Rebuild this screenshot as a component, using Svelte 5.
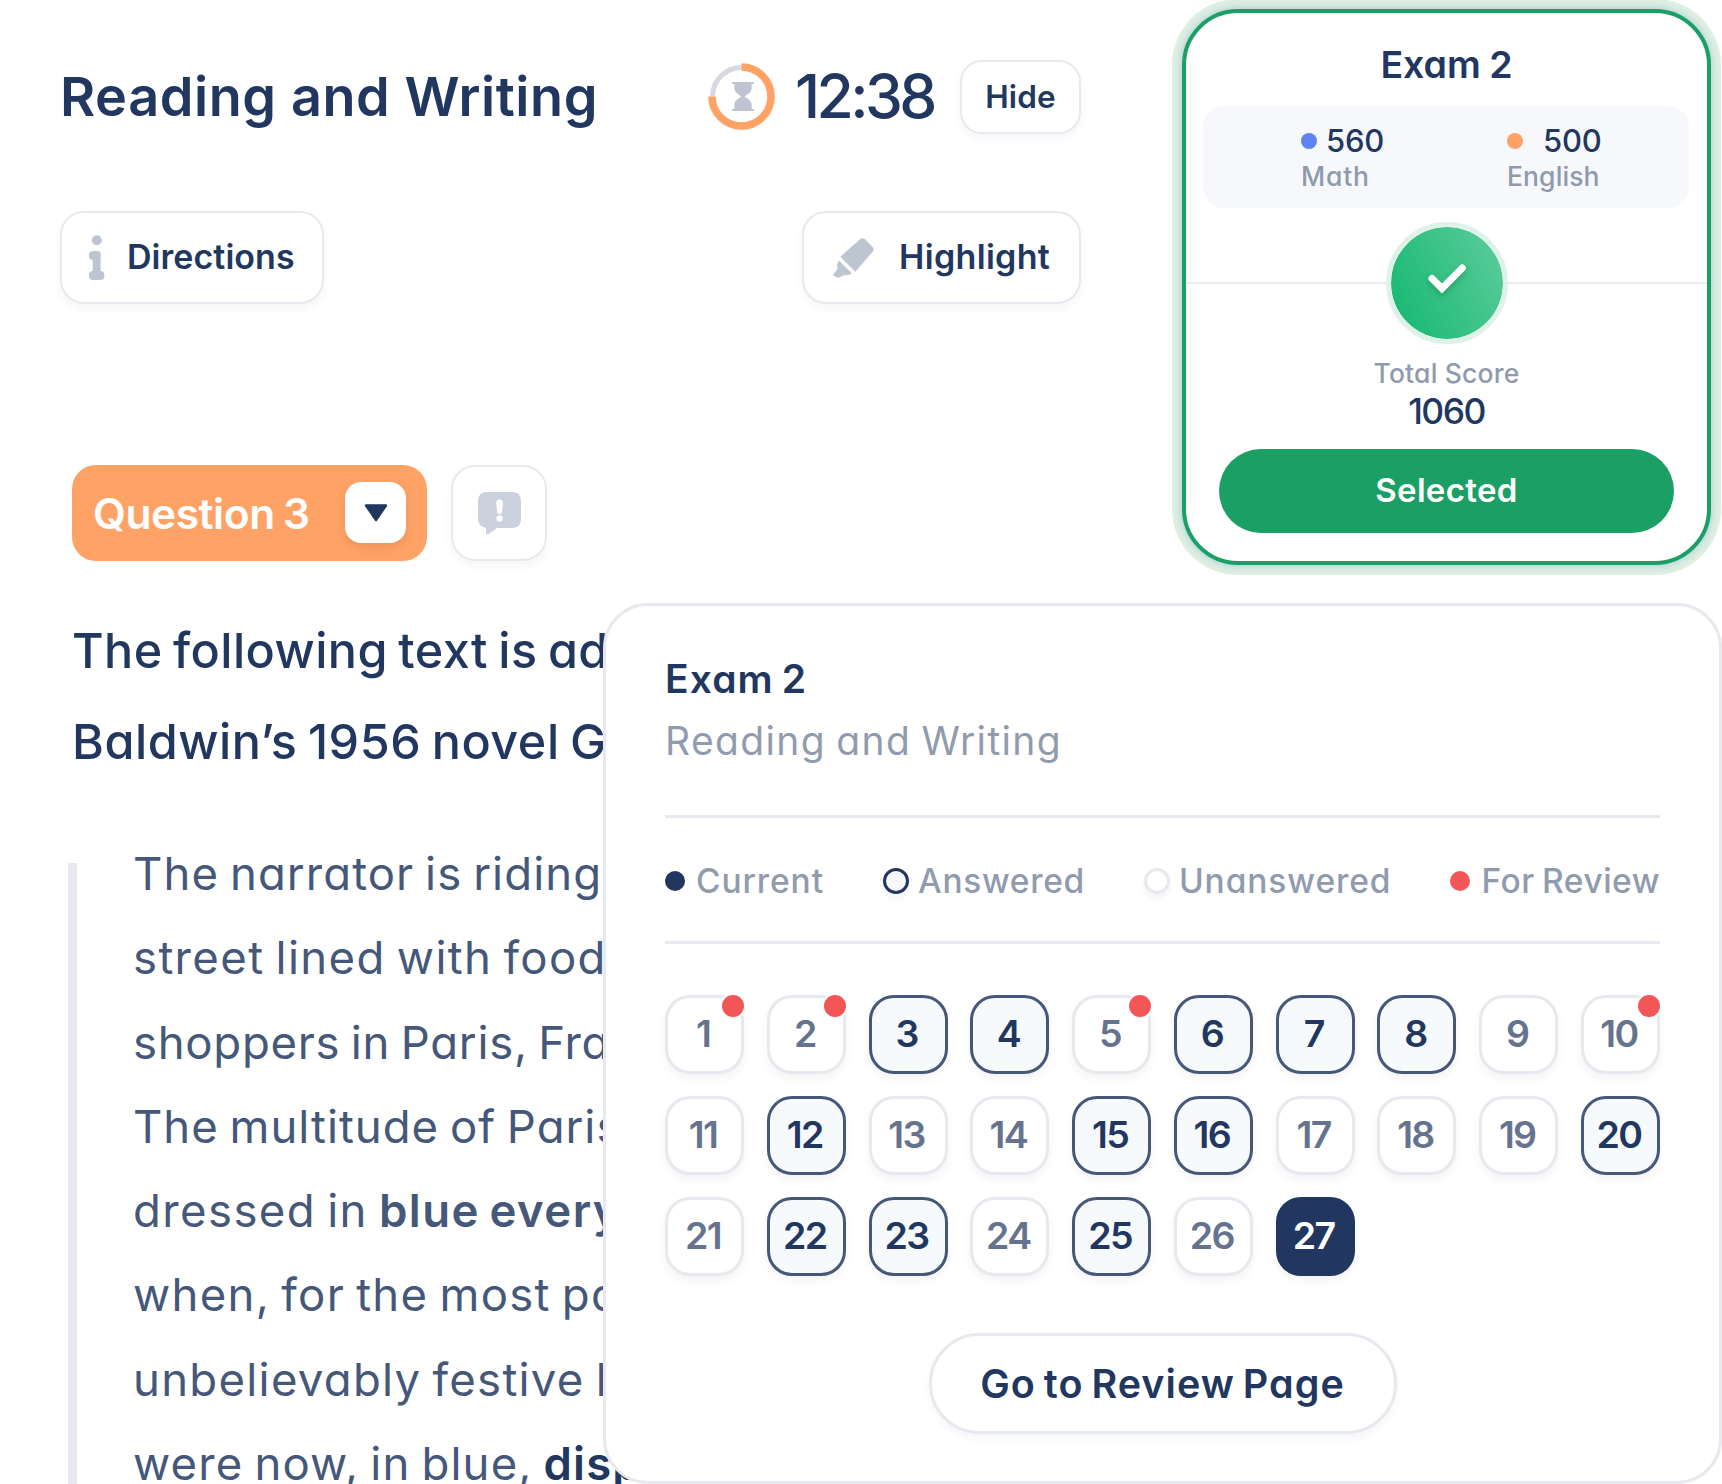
<script>
	const questions = Array.from({ length: 27 }, (_, i) => i + 1)
	const answered = [3, 4, 6, 7, 8, 12, 15, 16, 20, 22, 23, 25]
	const review = [1, 2, 5, 10]
	let current = 27

	const scores = [
		{ name: 'math', label: 'Math', value: 560 },
		{ name: 'english', label: 'English', value: 500 },
	]

	const legend = [
		{ name: 'current', label: 'Current' },
		{ name: 'answered', label: 'Answered' },
		{ name: 'unanswered', label: 'Unanswered' },
		{ name: 'review', label: 'For Review' },
	]

	// tracking is the letter spacing of the line in px
	const passage = [
		{ text: 'The narrator is riding', tracking: 1.08 },
		{ text: 'street lined with food', tracking: 1.36 },
		{ text: 'shoppers in Paris, Fra', tracking: .72 },
		{ text: 'The multitude of Paris', tracking: 1 },
		{ text: 'dressed in ', strong: 'blue every', tracking: 1.4 },
		{ text: 'when, for the most pa', tracking: 1.3 },
		{ text: 'unbelievably festive b', tracking: 1.28 },
		{ text: 'were now, in blue, ', strong: 'disp', dark: true, tracking: 1.15 },
	]
</script>

<div class="page">
	<main>
		<header>
			<h1>Reading and Writing</h1>
			<div class="timer">
				<svg class="ring" viewBox="0 0 67 67">
					<path d="M4.5 33.5 A29 29 0 0 1 33.5 4.5" fill="none" stroke="#d6d9e0" stroke-width="5" />
					<path d="M33.5 4 A29.5 29.5 0 1 1 4 33.5" fill="none" stroke="#ffa266" stroke-width="7.6" />
					<g transform="translate(24 19) scale(.333)" fill="#bdc5d1">
						<rect width="66" height="6" rx="2" />
						<rect y="81" width="66" height="6" rx="2" />
						<path d="M7 5H59V17C59 32 45 38 38 43.5C45 49 59 55 59 70V82H7V70C7 55 21 49 28 43.5C21 38 7 32 7 17Z" />
					</g>
				</svg>
				<span class="time">12:38</span>
				<button class="btn hide">Hide</button>
			</div>
		</header>

		<div class="tools">
			<button class="btn directions">
				<svg width="16" height="45" viewBox="0 0 16 45" fill="#bdc5d1">
					<circle cx="7.8" cy="5.2" r="5" />
					<rect y="16" width="11.6" height="9" rx="4" />
					<rect x="3.7" y="16" width="7.9" height="27" rx="3.5" />
					<rect y="36" width="15.4" height="9" rx="4" />
				</svg>
				<span>Directions</span>
			</button>
			<button class="btn highlight">
				<svg width="41" height="40" viewBox="0 0 123 120" fill="#bdc5d1">
					<path d="M22 56L82 3Q89 -2 96 4L119 27Q125 34 119 41L67 101Z" />
					<path d="M18 68L56 105Q52 111 45 111Q35 111 28 113L22 117Q17 121 12 118L3 114Q0 112 2 108L13 94Q14 88 12 82Q11 75 18 68Z" />
				</svg>
				<span>Highlight</span>
			</button>
		</div>

		<div class="question-bar">
			<div class="question">
				<span>Question 3</span>
				<button class="toggle" aria-label="Questions">
					<svg width="24" height="18" viewBox="0 0 24 18">
						<path d="M2 1.5H22L12 16Z" fill="#22375f" stroke="#22375f" stroke-width="2.4" stroke-linejoin="round" />
					</svg>
				</button>
			</div>
			<button class="btn report" aria-label="Report">
				<svg width="43" height="43" viewBox="0 0 43 43">
					<path d="M9 0H34Q43 0 43 9V27Q43 36 34 36H19L10 42.4Q8 43 8 41V36Q0 34 0 27V9Q0 0 9 0Z" fill="#cbd2de" />
					<path d="M18.2 11Q18.2 7.6 21.6 7.6Q25 7.6 25 11L24 20Q23.6 22.3 21.6 22.3Q19.6 22.3 19.2 20Z" fill="#fff" />
					<circle cx="21.6" cy="26.4" r="3.1" fill="#fff" />
				</svg>
			</button>
		</div>

		<div class="prompt">
			<div>The following text is ad</div>
			<div class="wide">Baldwin’s 1956 novel G</div>
		</div>

		<div class="passage">
			<div class="rule"></div>
			<div class="lines">
				{#each passage as line}
					<div style="letter-spacing: {line.tracking}px">{line.text}{#if line.strong}<strong class:dark={line.dark}>{line.strong}</strong>{/if}</div>
				{/each}
			</div>
		</div>
	</main>

	<section class="score-card">
		<h2>Exam 2</h2>
		<div class="scores">
			{#each scores as score}
				<div class="score {score.name}">
					<div class="value"><i></i><span>{score.value}</span></div>
					<div class="label">{score.label}</div>
				</div>
			{/each}
		</div>
		<div class="divider">
			<span></span>
			<div class="badge">
				<svg width="112" height="112" viewBox="0 0 112 112" fill="none" stroke-width="7" stroke-linecap="round">
					<path class="check" d="M41 51.5L51 61.5L71.3 41" stroke="#fff" />
				</svg>
			</div>
			<span></span>
		</div>
		<div class="total-label">Total Score</div>
		<div class="total">1060</div>
		<button class="selected">Selected</button>
	</section>

	<section class="navigator">
		<h3>Exam 2</h3>
		<div class="subject">Reading and Writing</div>
		<div class="legend">
			{#each legend as item}
				<div class="item {item.name}"><i></i><span>{item.label}</span></div>
			{/each}
		</div>
		<div class="grid">
			{#each questions as n}
				<button class="cell" class:answered={answered.includes(n)} class:current={n === current} on:click={() => current = n}>
					{n}
					{#if review.includes(n)}<i class="flag"></i>{/if}
				</button>
			{/each}
		</div>
		<button class="btn review-page">Go to Review Page</button>
	</section>
</div>

<style>
	:global(body) {
		background: #fff;
	}

	.page {
		position: relative;
		display: flex;
		align-items: flex-start;
		width: 1722px;
		height: 1484px;
		overflow: hidden;
		background: #fff;
		color: #22375f;
		font-family: Inter, sans-serif;
		font-feature-settings: 'cv11';
	}

	.page * {
		box-sizing: border-box;
	}

	h1, h2, h3 {
		margin: 0;
		font-weight: 600;
	}

	button {
		font: inherit;
		font-feature-settings: inherit;
		color: inherit;
		letter-spacing: inherit;
		padding: 0;
		border: none;
		display: flex;
		align-items: center;
		justify-content: center;
		white-space: nowrap;
		cursor: pointer;
	}

	svg {
		flex: none;
		overflow: visible;
	}

	.btn {
		background: #fff;
		border: 2px solid #e8e9ee;
		border-radius: 24px;
		box-shadow: 0 5px 8px rgba(30, 40, 70, .045);
		font-weight: 600;
	}

	main {
		width: 1081px;
		flex: none;
		padding: 59px 0 0 60px;
	}

	header {
		height: 75px;
		display: flex;
		align-items: center;
		justify-content: space-between;
	}

	h1 {
		font-size: 54px;
		letter-spacing: .58px;
		font-feature-settings: normal;
		white-space: nowrap;
	}

	.timer {
		display: flex;
		align-items: center;
	}

	.ring {
		width: 67px;
		height: 67px;
	}

	.time {
		width: 165px;
		margin-left: 20px;
		padding-bottom: 2px;
		font-size: 60.5px;
		font-weight: 500;
		letter-spacing: -3.6px;
	}

	.hide {
		width: 121px;
		height: 74px;
		padding-bottom: 1px;
		border-radius: 22px;
		font-size: 31.5px;
		letter-spacing: .1px;
	}

	.tools {
		display: flex;
		justify-content: space-between;
		margin-top: 77px;
	}

	.tools .btn {
		height: 93px;
		font-size: 34px;
		justify-content: flex-start;
	}

	.tools .btn span {
		padding-bottom: 3px;
	}

	.directions {
		width: 264px;
		padding-left: 27px;
		gap: 22px;
		letter-spacing: .05px;
	}

	.highlight {
		width: 279px;
		padding-left: 29px;
		gap: 25px;
		letter-spacing: .33px;
	}

	.question-bar {
		display: flex;
		gap: 24px;
		margin-top: 161px;
		padding-left: 12px;
	}

	.question {
		display: flex;
		align-items: center;
		justify-content: space-between;
		width: 355px;
		height: 96px;
		padding: 0 21px 1px 21px;
		border-radius: 24px;
		background: #ffa266;
		color: #fff;
		font-size: 42.5px;
		font-weight: 600;
		letter-spacing: -.45px;
		word-spacing: -2px;
		white-space: nowrap;
	}

	.question span {
		padding-top: 1px;
	}

	.toggle {
		width: 61px;
		height: 61px;
		border-radius: 16px;
		background: #fff;
		box-shadow: 0 4px 8px rgba(120, 60, 20, .14);
	}

	.report {
		width: 96px;
		height: 96px;
	}

	.prompt {
		margin-top: 45px;
		padding-left: 12px;
		font-size: 48.5px;
		font-weight: 500;
		line-height: 90.5px;
		letter-spacing: .44px;
		word-spacing: -3px;
		white-space: nowrap;
	}

	.prompt .wide {
		letter-spacing: .54px;
	}

	.passage {
		display: flex;
		gap: 56px;
		margin-top: 45px;
		padding-left: 8px;
	}

	.rule {
		width: 9px;
		margin-top: 31px;
		background: #e8e9ee;
	}

	.lines {
		color: #45587a;
		font-size: 45.5px;
		line-height: 84.3px;
		word-spacing: -3px;
		white-space: pre;
	}

	.lines strong {
		font-weight: 600;
	}

	.lines .dark {
		color: #22375f;
	}

	.score-card {
		flex: none;
		display: flex;
		flex-direction: column;
		width: 529px;
		height: 556px;
		margin: 9px 0 0 101px;
		padding-top: 27px;
		border: 4px solid #1aa064;
		border-radius: 56px;
		background: #fff;
		box-shadow: 0 0 9px rgba(120, 170, 205, .6), 0 0 0 10px #dff0e2;
		text-align: center;
	}

	h2 {
		font-size: 37.5px;
		line-height: 50px;
		word-spacing: -1px;
	}

	.scores {
		display: flex;
		height: 102px;
		margin: 16px 18px 0 17px;
		padding: 16px 0 0 98px;
		border-radius: 21px;
		background: #f7f8fb;
		text-align: left;
	}

	.score {
		flex: none;
		width: 206px;
	}

	.score:last-child {
		width: auto;
	}

	.value {
		display: flex;
		align-items: center;
		gap: 9px;
		height: 37px;
		font-size: 31px;
		font-weight: 500;
		letter-spacing: -.2px;
	}

	.value i {
		width: 16px;
		height: 16px;
		border-radius: 50%;
		background: #5b85f2;
	}

	.english .value {
		gap: 20px;
	}

	.english i {
		background: #ffa266;
	}

	.label {
		font-size: 26.5px;
		font-weight: 500;
		line-height: 35px;
		letter-spacing: .8px;
		color: #8f9aad;
	}

	.english .label {
		letter-spacing: .1px;
	}

	.divider {
		display: flex;
		align-items: center;
		margin-top: 14px;
	}

	.divider span {
		flex: 1;
		height: 2px;
		background: #ebebf1;
	}

	.badge {
		display: flex;
		border: 5px solid #dff2ea;
		border-radius: 50%;
		background: linear-gradient(65deg, #1cba75 12%, #58cb99 92%) padding-box;
	}

	.check {
		filter: drop-shadow(0 3px 3px rgba(10, 90, 55, .35));
	}

	.total-label {
		margin-top: 11px;
		font-size: 26.5px;
		font-weight: 500;
		line-height: 36px;
		letter-spacing: .2px;
		color: #8f9aad;
	}

	.total {
		font-size: 35.5px;
		font-weight: 500;
		line-height: 42px;
		letter-spacing: -1.6px;
	}

	.selected {
		height: 83.5px;
		margin: 16px 33px 0;
		padding-bottom: 2px;
		border-radius: 42px;
		background: #1aa064;
		color: #fff;
		font-size: 33px;
		font-weight: 600;
		letter-spacing: .35px;
	}

	/* lies over the passage */
	.navigator {
		position: absolute;
		left: 603px;
		top: 603px;
		width: 1119px;
		height: 881px;
		padding: 48px 59px 0;
		border: 3px solid #e8e9ee;
		border-radius: 45px;
		background: #fff;
	}

	h3 {
		font-size: 39px;
		line-height: 50px;
		letter-spacing: 1.1px;
		word-spacing: -3px;
	}

	.subject {
		height: 111px;
		font-size: 39px;
		line-height: 74px;
		letter-spacing: 1.36px;
		word-spacing: -2px;
		color: #909bad;
	}

	.legend {
		display: flex;
		align-items: center;
		justify-content: space-between;
		height: 129px;
		padding-top: 2px;
		border: solid #e8e9ee;
		border-width: 3px 0;
		color: #909bad;
		font-size: 33.5px;
		font-weight: 500;
		letter-spacing: .9px;
	}

	.item {
		display: flex;
		align-items: center;
		gap: 11px;
	}

	.item.answered,
	.item.unanswered {
		gap: 9px;
	}

	.item i {
		width: 20px;
		height: 20px;
		border-radius: 50%;
		background: #22375f;
	}

	.item.answered {
		letter-spacing: .66px;
	}

	.item.answered i,
	.item.unanswered i {
		width: 26px;
		height: 26px;
		border: 3px solid #22375f;
		background: #f7fafc;
		box-shadow: 0 4px 6px rgba(30, 40, 70, .06);
	}

	.item.unanswered i {
		border-color: #e8e9ee;
		background: #fff;
	}

	.item.review {
		letter-spacing: .5px;
		word-spacing: -2px;
	}

	.item.review i {
		background: #f35656;
	}

	.grid {
		display: grid;
		grid-template-columns: repeat(10, 79px);
		justify-content: space-between;
		row-gap: 22px;
		margin-top: 51px;
	}

	.cell {
		position: relative;
		height: 79px;
		padding: 0 3px 2px 0;
		border: 3px solid #e8e9ee;
		border-radius: 25px;
		background: #fff;
		box-shadow: 0 5px 8px rgba(30, 40, 70, .05);
		color: #66738f;
		font-size: 37.5px;
		font-weight: 600;
		letter-spacing: -1.7px;
	}

	.cell.answered {
		border-color: #45587a;
		background: #f7fafc;
		color: #22375f;
	}

	.cell.current {
		border-color: #22375f;
		background: #22375f;
		color: #fff;
	}

	.flag {
		position: absolute;
		top: -3px;
		right: -3px;
		width: 22px;
		height: 22px;
		border-radius: 50%;
		background: #f35656;
		box-shadow: 0 0 0 2px #fff;
	}

	.review-page {
		width: 468px;
		height: 101px;
		margin: 57px auto 0;
		border-width: 3px;
		border-radius: 51px;
		font-size: 39.5px;
		letter-spacing: 1.02px;
		word-spacing: -3px;
	}
</style>
